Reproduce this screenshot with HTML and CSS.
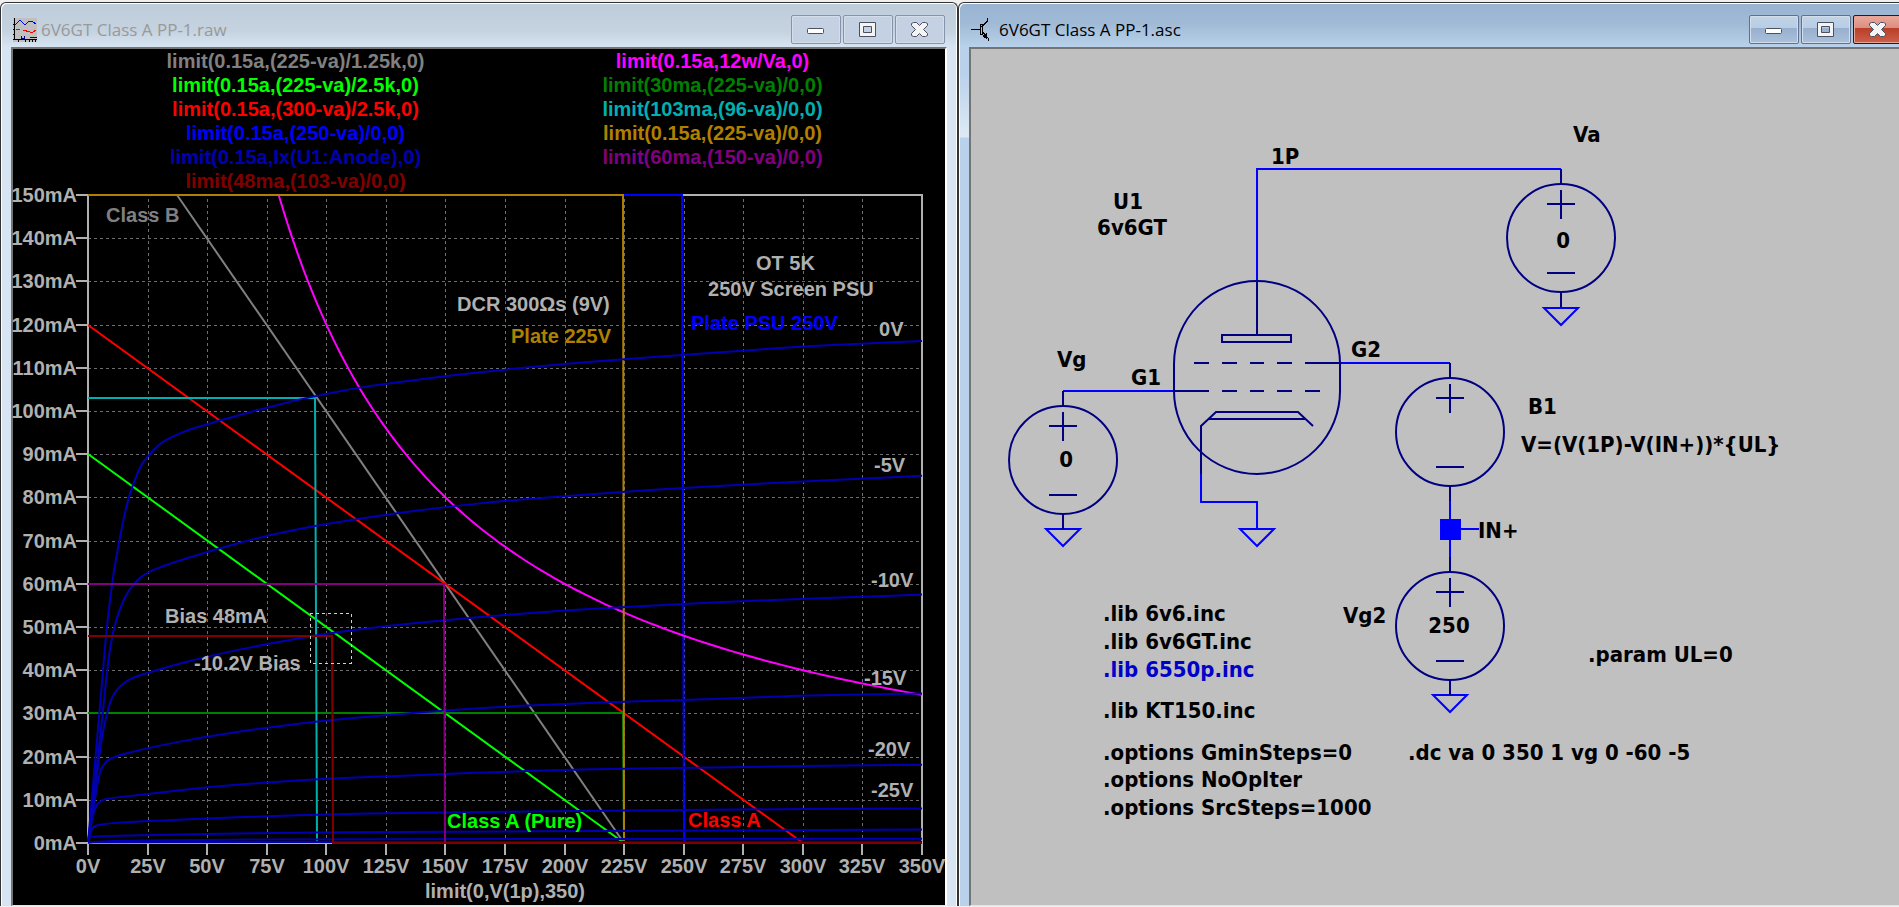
FILE: index.html
```html
<!DOCTYPE html>
<html lang="en">
<head>
  <meta charset="UTF-8">
  <title>6V6GT Class A PP-1</title>
  <link rel="stylesheet" href="styles.css">
</head>
<body>
  <!-- shared caption button glyphs -->
  <svg class="defs" width="0" height="0" aria-hidden="true">
    <symbol id="ico-min" viewBox="0 0 20 18">
      <rect x="1.500" y="7.500" width="16" height="5" rx="1" fill="#fff" stroke="#4b5060" />
    </symbol>
    <symbol id="ico-max" viewBox="0 0 20 18">
      <path d="M1.500 1.500h16v14h-16zM5.500 5.500v6h8v-6z" fill="#f4f4f4" fill-rule="evenodd" stroke="#4b5060" />
    </symbol>
    <symbol id="ico-close" viewBox="0 0 20 18">
      <path d="M1.500 2.500l2-1h3l3 3 3-3h3l2 1v2l-4 4 4 4v2l-2 1h-3l-3-3-3 3h-3l-2-1v-2l4-4-4-4z" fill="#f4f4f4" stroke="#4b5060" />
    </symbol>
  </svg>

  <div class="desktop">
    <section class="window inactive">
      <header class="titlebar">
        <svg class="app-icon" viewBox="0 0 24 24" shape-rendering="crispEdges" aria-hidden="true">
          <rect width="24" height="24" fill="#c0c0c0" />
          <path d="M1.500 0v22M0 21.500h24M0 6.500h2M0 11.500h2M0 16.500h2M5.500 22v2M12.500 22v2M16.500 22v2M19.500 22v2M22.500 22v2" stroke="#000" fill="none" />
          <path d="M2 7l5-5 5 5 4-4h3l4 3" stroke="#0000ff" fill="none" />
          <path d="M3 11.500h4M10 12l7 2h3l3-2" stroke="#ff0000" fill="none" />
          <path d="M8.500 18v2h3v-2M17 19.500h7" stroke="#000080" fill="none" />
        </svg>
        <h1 class="title">6V6GT Class A PP-1.raw</h1>
        <div class="controls">
          <button type="button" aria-label="Minimize"><svg><use href="#ico-min" /></svg></button>
          <button type="button" aria-label="Maximize"><svg><use href="#ico-max" /></svg></button>
          <button type="button" aria-label="Close"><svg><use href="#ico-close" /></svg></button>
        </div>
      </header>
      <div class="client plot-pane">
        <div class="legend">
          <ul>
            <li class="c-gray">limit(0.15a,(225-va)/1.25k,0)</li>
            <li class="c-lime">limit(0.15a,(225-va)/2.5k,0)</li>
            <li class="c-red">limit(0.15a,(300-va)/2.5k,0)</li>
            <li class="c-blue">limit(0.15a,(250-va)/0,0)</li>
            <li class="c-anode">limit(0.15a,Ix(U1:Anode),0)</li>
            <li class="c-maroon">limit(48ma,(103-va)/0,0)</li>
          </ul>
          <ul>
            <li class="c-magenta">limit(0.15a,12w/Va,0)</li>
            <li class="c-green">limit(30ma,(225-va)/0,0)</li>
            <li class="c-cyan">limit(103ma,(96-va)/0,0)</li>
            <li class="c-gold">limit(0.15a,(225-va)/0,0)</li>
            <li class="c-purple">limit(60ma,(150-va)/0,0)</li>
          </ul>
        </div>
        <svg class="plot" viewBox="13 193 932 712">
          <g id="grid" class="grid"></g>
          <g id="axes" class="axes"></g>
          <g id="traces" class="traces"></g>
          <rect class="marker" x="310" y="613" width="41" height="50" />
          <g id="ticks" class="ticks"></g>
          <text class="c-axis mid" x="505" y="898">limit(0,V(1p),350)</text>
          <g class="c-axis">
            <text x="457" y="311">DCR 300Ωs (9V)</text>
            <text x="756" y="270">OT 5K</text>
            <text x="708" y="296">250V Screen PSU</text>
            <text x="165" y="623">Bias 48mA</text>
            <text x="194" y="670">-10.2V Bias</text>
            <text x="879" y="336">0V</text>
            <text x="874" y="472">-5V</text>
            <text x="871" y="587">-10V</text>
            <text x="864" y="685">-15V</text>
            <text x="868" y="756">-20V</text>
            <text x="871" y="797">-25V</text>
          </g>
          <text class="c-gray" x="106" y="222">Class B</text>
          <text class="c-gold" x="511" y="343">Plate 225V</text>
          <text class="c-blue" x="691" y="330">Plate PSU 250V</text>
          <text class="c-lime" x="447" y="828">Class A (Pure)</text>
          <text class="c-red" x="688" y="827">Class A</text>
        </svg>
      </div>
    </section>

    <section class="window active">
      <header class="titlebar">
        <svg class="app-icon" viewBox="0 0 24 24" shape-rendering="crispEdges" aria-hidden="true">
          <path d="M0 11.500h9M16.500 0v3l-6 6M11 13l6 7v3" stroke="#000" fill="none" />
          <path d="M9.500 6.500h2v10h-2z" fill="none" stroke="#000" />
          <path d="M16 15v6l-5-3z" fill="#000" />
        </svg>
        <h1 class="title">6V6GT Class A PP-1.asc</h1>
        <div class="controls">
          <button type="button" aria-label="Minimize"><svg><use href="#ico-min" /></svg></button>
          <button type="button" aria-label="Maximize"><svg><use href="#ico-max" /></svg></button>
          <button type="button" class="close" aria-label="Close"><svg><use href="#ico-close" /></svg></button>
        </div>
      </header>
      <div class="client schematic-pane">
        <svg class="schematic" viewBox="971 49 932 856">
          <defs>
            <!-- origin is the positive pin -->
            <g id="source">
              <path d="M0 0v15M-14 35h28M0 21v29M-14 104h28M0 123v15" />
              <circle cx="0" cy="69" r="54" />
            </g>
            <path id="ground" d="M-17 0h34L0 17z" />
          </defs>

          <g class="wire">
            <path d="M1257 281V169H1561" />
            <path d="M1063 391H1174" />
            <path d="M1340 363H1450" />
            <path d="M1201 474V502H1257V529" />
            <path d="M1450 501V558M1461 529H1479" />
            <use href="#ground" x="1561" y="308" />
            <use href="#ground" x="1063" y="529" />
            <use href="#ground" x="1257" y="529" />
            <use href="#ground" x="1450" y="695" />
            <rect class="port" x="1440" y="519" width="21" height="21" />
          </g>

          <g class="part">
            <use href="#source" x="1561" y="169" />
            <use href="#source" x="1063" y="391" />
            <use href="#source" x="1450" y="363" />
            <use href="#source" x="1450" y="557" />
            <!-- tube -->
            <path d="M1174 364A83 83 0 0 1 1340 364V391A83 83 0 0 1 1174 391Z" />
            <path d="M1257 281V335M1222 335h69v7h-69z" />
            <path d="M1194 363h15M1222 363h15M1250 363h14M1277 363h15M1305 363h35" />
            <path d="M1174 391h35M1222 391h15M1250 391h14M1277 391h15M1305 391h15" />
            <path d="M1201 474V426L1216 412H1298L1313 426M1208 419H1305" />
          </g>

          <g class="label">
            <text x="1573" y="142">Va</text>
            <text x="1271" y="164">1P</text>
            <text class="mid" x="1128" y="209">U1</text>
            <text class="mid" x="1132" y="235">6v6GT</text>
            <text class="mid" x="1563" y="248">0</text>
            <text x="1057" y="367">Vg</text>
            <text class="mid" x="1066" y="467">0</text>
            <text x="1131" y="385">G1</text>
            <text x="1351" y="357">G2</text>
            <text x="1528" y="414">B1</text>
            <text x="1521" y="452">V=(V(1P)-V(IN+))*{UL}</text>
            <text x="1478" y="538">IN+</text>
            <text x="1343" y="623">Vg2</text>
            <text class="mid" x="1449" y="633">250</text>
            <text x="1588" y="662">.param UL=0</text>
            <text x="1103" y="621">.lib 6v6.inc</text>
            <text x="1103" y="649">.lib 6v6GT.inc</text>
            <text class="comment" x="1103" y="677">.lib 6550p.inc</text>
            <text x="1103" y="718">.lib KT150.inc</text>
            <text x="1103" y="760">.options GminSteps=0</text>
            <text x="1103" y="787">.options NoOpIter</text>
            <text x="1103" y="815">.options SrcSteps=1000</text>
            <text x="1408" y="760">.dc va 0 350 1 vg 0 -60 -5</text>
          </g>
        </svg>
      </div>
    </section>
  </div>

  <script>
    const NS = "http://www.w3.org/2000/svg";
    const area = { left: 88, right: 922, top: 195, bottom: 843 };
    const maxV = 350;
    const maxI = 150;

    // volts / milliamps to plot coordinates
    const X = v => area.left + v * (area.right - area.left) / maxV;
    const Y = i => area.bottom - i * (area.bottom - area.top) / maxI;

    // anode current, one list of [V, mA] per grid voltage
    const anode = [
      [[0,0],[1.1,6.9],[2.9,18.4],[5,31.6],[6.2,39.3],[7.6,48.5],[9.2,56.3],[10.9,63.2],[12.8,69],[15.9,77.8],[18.8,82.9],[21.8,87.1],[25.3,89.7],[30.2,92.5],[35.8,94.2],[42.8,95.8],[50,96.9],[55.4,97.8],[75,100.8],[89,102.7],[96,103.5],[110,105.1],[125,106.3],[150,108.1],[175,109.6],[200,110.9],[225,112],[250,113],[275,114],[300,114.9],[325,115.6],[350,116.2]],
      [[0,0],[2.2,10],[4.3,20.8],[6.2,30],[7.8,39.3],[9.9,47.4],[12,52],[14.8,56.3],[19,60.1],[24.6,62.6],[33,64.4],[41.4,65.9],[54,68],[75,71.2],[95,73.4],[125,76],[150,77.8],[175,79.2],[200,80.3],[225,81.3],[250,82.2],[275,83],[300,83.7],[325,84.3],[350,85]],
      [[0,0],[2,8.4],[3.6,15.4],[5.7,24.2],[7.2,28.1],[9,32.3],[11,34.8],[14.8,37],[19,38.4],[25.3,39.4],[33,40.7],[50,43.2],[75,46.1],[100,48.5],[125,50.2],[150,51.6],[175,52.8],[200,53.8],[225,54.6],[250,55.4],[275,56],[300,56.5],[325,57],[350,57.5]],
      [[0,0],[2,7],[3.6,12.7],[5,16.5],[6.4,18],[9.2,19.8],[25,22],[50,24.7],[75,26.7],[100,28.4],[125,29.6],[150,30.7],[175,31.6],[200,32.2],[225,32.7],[250,33.1],[275,33.6],[300,34.1],[350,34.6]],
      [[0,0],[1.5,5.2],[3,8.3],[5,9.8],[9,10.4],[25,11.3],[50,13],[75,14],[100,14.9],[125,15.4],[150,16],[175,16.5],[200,16.9],[225,17.2],[250,17.4],[275,17.6],[325,18],[350,18.1]],
      [[0,0],[1,3],[3.6,4.4],[25,5.1],[50,5.7],[75,6.2],[100,6.6],[125,6.9],[150,7.1],[200,7.4],[250,7.7],[350,8]],
      [[0,0],[0.5,1],[1,1.6],[25,1.8],[50,2.1],[75,2.3],[100,2.5],[150,2.6],[225,2.8],[350,3.1]],
      [[0,0],[1,0.5],[50,0.7],[100,0.9],[350,1]],
      [[0,0.2],[350,0.3]]
    ];

    function add(parent, tag, attrs, text) {
      const el = document.createElementNS(NS, tag);
      for (const key in attrs) el.setAttribute(key, attrs[key]);
      if (text) el.textContent = text;
      document.getElementById(parent).appendChild(el);
    }

    function line(parent, x1, y1, x2, y2) {
      add(parent, "path", { d: `M${x1} ${y1}L${x2} ${y2}` });
    }

    function trace(name, points) {
      const d = "M" + points.map(p => `${Math.round(X(p[0]))} ${Math.round(Y(p[1]))}`).join("L");
      add("traces", "path", { d, class: "s-" + name });
    }

    function smooth(name, points) {
      const p = points.map(q => [X(q[0]), Y(q[1])]);
      let d = `M${p[0]}`;
      for (let n = 1; n < p.length - 1; n++) {
        d += `Q${p[n]} ${(p[n][0] + p[n + 1][0]) / 2},${(p[n][1] + p[n + 1][1]) / 2}`;
      }
      add("traces", "path", { d: d + `L${p[p.length - 1]}`, class: "s-" + name });
    }

    for (let v = 0; v <= maxV; v += 25) {
      const x = Math.round(X(v));
      if (v > 0 && v < maxV) line("grid", x + 0.5, area.top + 4, x + 0.5, area.bottom);
      line("ticks", x, area.bottom + 1, x, area.bottom + 12);
      add("ticks", "text", { x, y: 873, class: "mid" }, v + "V");
    }
    for (let i = 0; i <= maxI; i += 10) {
      const y = Math.round(Y(i));
      if (i > 0 && i < maxI) line("grid", area.left, y + 0.5, area.right, y + 0.5);
      line("ticks", area.left - 12, y, area.left, y);
      add("ticks", "text", { x: 77, y: y + 7, class: "end" }, i + "mA");
    }
    add("axes", "rect", { x: area.left, y: area.top, width: area.right - area.left, height: area.bottom - area.top });

    // load lines and limits
    trace("gray", [[37.5, 150], [225, 0]]);
    trace("lime", [[0, 90], [225, 0]]);
    trace("red", [[0, 120], [300, 0]]);
    trace("blue", [[0, 150], [249.2, 150], [250, 0]]);
    smooth("magenta", Array.from({ length: 91 }, (_, n) => [80 + n * 3, 12000 / (80 + n * 3)]));
    trace("green", [[0, 30], [224.6, 30], [225, 0]]);
    trace("cyan", [[0, 103], [95.3, 103], [96, 0]]);
    trace("gold", [[0, 150], [224.6, 150], [225, 0]]);
    anode.forEach(points => smooth("anode", points));
    trace("purple", [[0, 60], [149.4, 60], [150, 0]]);
    trace("maroon", [[0, 48], [102.4, 48], [103, 0], [350, 0]]);
  </script>
</body>
</html>
```

FILE: styles.css
```css
* {
  box-sizing: border-box;
}

body {
  margin: 0;
  background: #f0f0f0;
  font-family: "Open Sans", "Noto Sans", sans-serif;
  overflow: hidden;
}

.defs {
  position: absolute;
}

.desktop {
  display: flex;
  height: 100vh;
  padding: 2px 0 1px;
}

/* window frame */
.window {
  flex: 0 0 50.45%;
  display: flex;
  flex-direction: column;
  padding: 1px 10px 0;
  border: 1px solid #333;
  border-bottom: 0;
  border-radius: 6px 6px 0 0;
  box-shadow: inset 1px 1px 0 #fff, inset -1px 0 0 #fff;
}
.inactive {
  background: linear-gradient(#bfcddb, #c5d2df 28px, #d7e4f1 44px);
  color: #999;
}
.active {
  background:
    linear-gradient(#98b4d2, #a0bad6 20px, #b9d1ea 44px, #b9d1ea 70px, #dce8f4 130px, #dce8f4 134px, #b9d1ea 135px);
  color: #000;
}

.titlebar {
  display: flex;
  align-items: center;
  gap: 4px;
  padding: 11px 0 3px 2px;
}
.app-icon {
  width: 24px;
  height: 24px;
}
.title {
  flex: 1;
  margin: 0;
  font-size: 17px;
  line-height: 24px;
  font-weight: 400;
}
.controls {
  display: flex;
  gap: 2px;
  margin-right: 2px;
}
.controls button {
  display: flex;
  align-items: center;
  justify-content: center;
  width: 50px;
  height: 29px;
  padding: 0;
  border: 1px solid #8593ab;
  border-radius: 2px;
  background: #c3d1e2;
  box-shadow: inset 0 0 0 1px #d3deea;
}
.controls svg {
  width: 20px;
  height: 18px;
}
.active .controls button {
  border-color: #5f718c;
  background: linear-gradient(#c1d4e8, #b8cde4 45%, #98b0ce 46%, #a9c1dc);
}
.active .controls .close {
  border-color: #3c1010;
  background: linear-gradient(#e9a99c, #dc8d7e 45%, #b93f2a 46%, #cb6048);
  box-shadow: inset 0 0 0 1px #e5a598;
}

.client {
  flex: 1;
  display: flex;
  flex-direction: column;
  min-height: 0;
  border: 2px solid #fff;
  border-top-color: #747474;
  border-left-color: #747474;
  border-bottom: 1px solid #e3e3e3;
}
.client > svg {
  flex: 1;
  width: 100%;
  min-height: 0;
}

/* waveform window */
.plot-pane {
  background: #000;
  font: bold 20px/24px "Liberation Sans", Arial, sans-serif;
}
.legend {
  display: grid;
  grid-template-columns: 1fr 1fr;
  padding: 0 24px 0 74px;
  text-align: center;
}
.legend ul {
  margin: 0;
  padding: 0;
  list-style: none;
}
.plot {
  overflow: visible;
}
.grid path {
  stroke: #6e6e6e;
  stroke-dasharray: 3 3;
}
.axes rect, .ticks path {
  fill: none;
  stroke: #b0b0b0;
  stroke-width: 2;
}
.grid, .axes, .ticks path, .marker {
  shape-rendering: crispEdges;
}
.traces path {
  fill: none;
  stroke-width: 2;
}
.marker {
  fill: none;
  stroke: #d0d0d0;
  stroke-dasharray: 3 3;
}
.mid { text-anchor: middle; }
.end { text-anchor: end; }

.ticks, .c-axis { fill: #b0b0b0; }
.c-gray { color: #808080; fill: #808080; }
.c-lime { color: #00ff00; fill: #00ff00; }
.c-red { color: #ff0000; fill: #ff0000; }
.c-blue { color: #0000ff; fill: #0000ff; }
.c-anode { color: #0000b0; }
.c-maroon { color: #800000; }
.c-magenta { color: #ff00ff; }
.c-green { color: #008000; }
.c-cyan { color: #00b0b0; }
.c-gold { color: #b08000; fill: #b08000; }
.c-purple { color: #800080; }

.s-gray { stroke: #808080; }
.s-lime { stroke: #00ff00; }
.s-red { stroke: #ff0000; }
.s-blue { stroke: #0000ff; }
.s-anode { stroke: #0000b0; }
.s-maroon { stroke: #800000; }
.s-magenta { stroke: #ff00ff; }
.s-green { stroke: #008000; }
.s-cyan { stroke: #00b0b0; }
.s-gold { stroke: #b08000; }
.s-purple { stroke: #800080; }

/* schematic window */
.schematic-pane {
  background: #c0c0c0;
  font: bold 22px "DejaVu Sans Condensed", "Noto Sans", sans-serif;
}
.wire, .part {
  fill: none;
  stroke: #0000ff;
  stroke-width: 2;
}
.part {
  stroke: #000080;
}
.port {
  fill: #0000ff;
  stroke: none;
}
.comment {
  fill: #0000c8;
}
```
